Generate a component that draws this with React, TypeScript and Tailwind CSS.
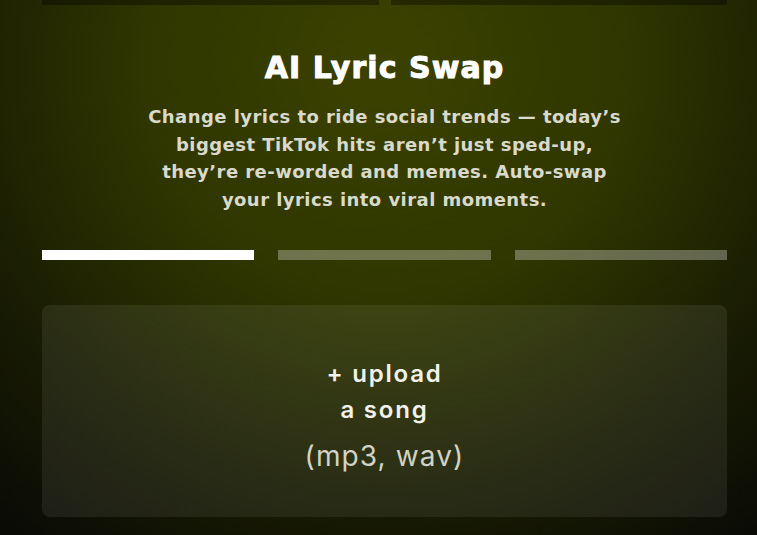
import React from 'react';

const steps = [true, false, false];

export default function App() {
  return (
    <div className="min-h-screen w-full overflow-hidden bg-[#0a0b05] bg-[radial-gradient(ellipse_80%_110%_at_51%_12%,#3b4200_0%,#2f3600_40%,#181b03_75%,#0a0b05_100%)] pl-[42px] pr-[30px] font-['Inter',sans-serif]">
      <div className="grid grid-cols-2 gap-3">
        <div className="h-[5px] bg-black/35" />
        <div className="h-[5px] bg-black/35" />
      </div>

      <div className="flex flex-col items-center pt-[45px] text-center">
        <h1 className="font-['DejaVu_Sans',sans-serif] text-[30px] leading-[36px] font-bold tracking-[0.035em] text-white [-webkit-text-stroke:1px_#fff]">
          AI Lyric Swap
        </h1>
        <p className="mt-[17px] font-['DejaVu_Sans',sans-serif] text-[18px] leading-[27.5px] font-bold tracking-[0.025em] text-[#d9dacb]">
          Change lyrics to ride social trends — today’s
          <br />
          biggest TikTok hits aren’t just sped-up,
          <br />
          they’re re-worded and memes. Auto-swap
          <br />
          your lyrics into viral moments.
        </p>
      </div>

      <div className="mt-[37px] grid grid-cols-3 gap-6">
        {steps.map((active, i) => (
          <div key={i} className={active ? 'h-[10px] bg-white' : 'h-[10px] bg-white/30'} />
        ))}
      </div>

      <div className="mt-[45px] flex h-[212px] flex-col items-center justify-center rounded-lg bg-white/[0.07] pt-[8px] text-center">
        <p className="text-[24px] leading-[36px] font-semibold tracking-[0.075em] text-[#f2f2ea]">
          + upload
          <br />
          a song
        </p>
        <p className="mt-[10px] text-[28px] leading-[36px] font-normal tracking-[0.04em] text-[#d2d3c6]">
          (mp3, wav)
        </p>
      </div>
    </div>
  );
}
